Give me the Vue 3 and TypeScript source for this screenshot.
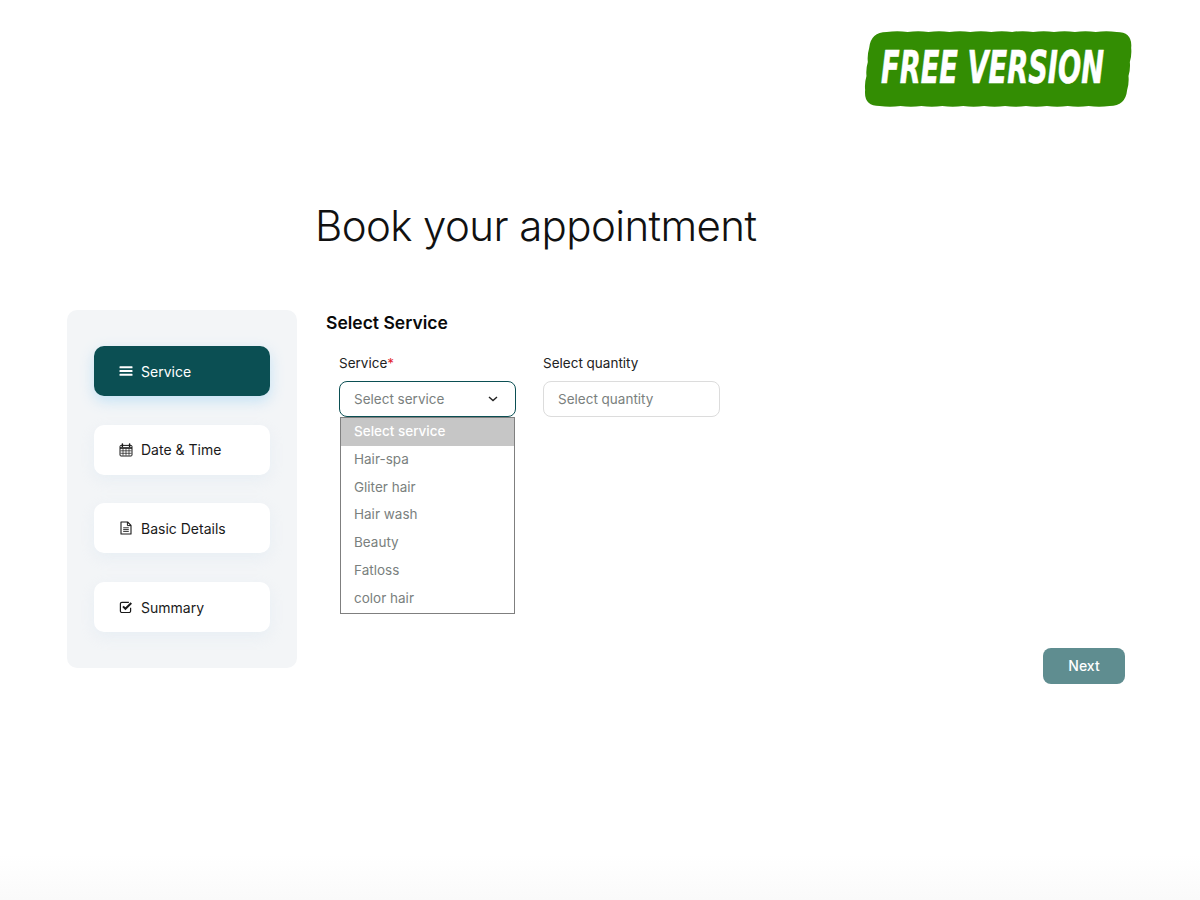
<script setup lang="ts">
import { ref } from 'vue'

type Step = { id: string; label: string; icon: string }

const steps: Step[] = [
  { id: 'service', label: 'Service', icon: 'bars' },
  { id: 'date', label: 'Date & Time', icon: 'calendar' },
  { id: 'details', label: 'Basic Details', icon: 'file' },
  { id: 'summary', label: 'Summary', icon: 'check' },
]
const options = ['Select service', 'Hair-spa', 'Gliter hair', 'Hair wash', 'Beauty', 'Fatloss', 'color hair']

const activeStep = ref('service')
const selected = ref('Select service')

// scalloped edge for the badge: small bumps along the straight sides of a skewed rounded box
function scallop(x1: number, y1: number, x2: number, y2: number, n: number, out: number) {
  let d = ''
  const dx = (x2 - x1) / n
  const dy = (y2 - y1) / n
  const len = Math.hypot(dx, dy)
  const nx = (dy / len) * out
  const ny = (-dx / len) * out
  for (let i = 1; i <= n; i++) {
    const mx = x1 + dx * (i - 0.5) + nx
    const my = y1 + dy * (i - 0.5) + ny
    d += `Q${mx.toFixed(1)} ${my.toFixed(1)} ${(x1 + dx * i).toFixed(1)} ${(y1 + dy * i).toFixed(1)}`
  }
  return d
}
const badgePath =
  'M16 2' +
  scallop(16, 2, 246, 2, 11, 1.6) +
  'Q262 2 262 18' +
  scallop(262, 18, 262, 60, 3, 1.4) +
  'Q262 76 246 76' +
  scallop(246, 76, 16, 76, 11, 1.6) +
  'Q0 76 0 60' +
  scallop(0, 60, 0, 18, 3, 1.4) +
  'Q0 2 16 2Z'
</script>

<template>
  <div class="page">
    <div class="badge">
      <svg class="badge-bg" width="274" height="80" viewBox="0 0 274 80">
        <g transform="translate(8 0) skewX(-5.5) translate(4 1)">
          <path :d="badgePath" fill="#338d03" />
        </g>
      </svg>
      <span class="badge-text">FREE VERSION</span>
    </div>

    <h1 class="title">Book your appointment</h1>

    <div class="wizard">
      <aside class="sidebar">
        <button
          v-for="step in steps"
          :key="step.id"
          class="step"
          :class="{ active: activeStep === step.id }"
          @click="activeStep = step.id"
        >
          <svg v-if="step.icon === 'bars'" class="icon" viewBox="0 0 14 14">
            <path d="M1 2.2h12a.5.5 0 0 1 .5.5v1a.5.5 0 0 1-.5.5H1a.5.5 0 0 1-.5-.5v-1a.5.5 0 0 1 .5-.5ZM1 6h12a.5.5 0 0 1 .5.5v1a.5.5 0 0 1-.5.5H1a.5.5 0 0 1-.5-.5v-1A.5.5 0 0 1 1 6ZM1 9.8h12a.5.5 0 0 1 .5.5v1a.5.5 0 0 1-.5.5H1a.5.5 0 0 1-.5-.5v-1a.5.5 0 0 1 .5-.5Z" fill="currentColor" />
          </svg>
          <svg v-else-if="step.icon === 'calendar'" class="icon" viewBox="0 0 14 14">
            <rect x="1" y="2.4" width="12" height="10.6" rx="1" fill="none" stroke="currentColor" />
            <path d="M1 5h12" stroke="currentColor" stroke-width="1.6" />
            <path d="M3.4 1v2.6M10.6 1v2.6" stroke="currentColor" stroke-width="1.5" stroke-linecap="round" />
            <path d="M4 5.5v7M7 5.5v7M10 5.5v7M1.5 7.8h11M1.5 10.3h11" stroke="currentColor" stroke-width=".7" />
          </svg>
          <svg v-else-if="step.icon === 'file'" class="icon" viewBox="0 0 14 14">
            <path d="M2 1h6.6L12 4.4V13H2Z" fill="none" stroke="currentColor" stroke-width="1.1" stroke-linejoin="round" />
            <path d="M8.4 1v3.6H12" fill="none" stroke="currentColor" />
            <path d="M4.2 6.8h5.6M4.2 8.6h5.6M4.2 10.4h5.6" stroke="currentColor" stroke-width=".9" />
          </svg>
          <svg v-else class="icon" viewBox="0 0 14 14">
            <path d="M11.6 7.8V11a1.5 1.5 0 0 1-1.5 1.5H2.9A1.5 1.5 0 0 1 1.4 11V3.8a1.5 1.5 0 0 1 1.5-1.5h7" fill="none" stroke="currentColor" stroke-width="1.2" />
            <path d="M4 6.4l2.4 2.4L12.3 3" fill="none" stroke="currentColor" stroke-width="2" />
          </svg>
          <span>{{ step.label }}</span>
        </button>
      </aside>

      <main class="content">
        <h2 class="section-title">Select Service</h2>
        <div class="fields">
          <div class="field">
            <label class="label">Service<span class="req">*</span></label>
            <div class="control open">
              <span>{{ selected }}</span>
              <svg class="chevron" width="10" height="6" viewBox="0 0 10 6">
                <path d="M1 1l4 3.6L9 1" fill="none" stroke="#222" stroke-width="1.4" />
              </svg>
            </div>
            <ul class="options">
              <li
                v-for="opt in options"
                :key="opt"
                :class="{ current: opt === selected }"
                @click="selected = opt"
              >
                {{ opt }}
              </li>
            </ul>
          </div>
          <div class="field">
            <label class="label">Select quantity</label>
            <div class="control">
              <span>Select quantity</span>
            </div>
          </div>
        </div>
        <button class="next">Next</button>
      </main>
    </div>
  </div>
</template>

<style>
html, body { margin: 0; background: #fff; }
</style>

<style scoped>
.page {
  position: relative;
  box-sizing: border-box;
  height: 900px;
  overflow: hidden;
  padding-top: 198px;
  font-family: Inter, "Liberation Sans", sans-serif;
  background: linear-gradient(to bottom, #fff 0, #fff 855px, #fafafa 900px);
}

.badge {
  position: absolute;
  left: 859px;
  top: 29px;
  width: 274px;
  height: 80px;
}
.badge-bg { position: absolute; left: 0; top: 0; }
.badge-text {
  position: absolute;
  left: 22px;
  top: 11px;
  color: #fff;
  font-family: "DejaVu Sans", sans-serif;
  font-weight: 700;
  font-style: italic;
  font-size: 44px;
  line-height: 56px;
  white-space: nowrap;
  transform-origin: left center;
  transform: scaleX(0.62);
  -webkit-text-stroke: 0.6px #fff;
}

.title {
  margin: 0 0 56px 315px;
  font-size: 42px;
  line-height: 56px;
  font-weight: 300;
  letter-spacing: -0.6px;
  color: #111;
}

.wizard {
  display: flex;
  gap: 29px;
  padding: 0 75px 0 67px;
}

.sidebar {
  box-sizing: border-box;
  width: 230px;
  height: 358px;
  padding: 36px 27px;
  background: #f3f5f7;
  border-radius: 10px;
  display: flex;
  flex-direction: column;
  gap: 28.7px;
}
.step {
  display: flex;
  align-items: center;
  gap: 8px;
  height: 50px;
  flex: none;
  padding: 0 25px;
  border: none;
  border-radius: 10px;
  background: #fff;
  color: #1a1a1a;
  font: inherit;
  font-size: 14px;
  box-shadow: 0 5px 14px rgba(210, 225, 240, 0.3);
  cursor: pointer;
}
.step.active {
  background: #0b4f53;
  color: #fff;
  box-shadow: 0 5px 14px rgba(140, 205, 245, 0.45);
}
.icon { width: 14px; height: 14px; flex: none; }

.content { flex: 1; display: flex; flex-direction: column; }
.section-title {
  margin: 0 0 17px;
  font-size: 17.5px;
  line-height: 26px;
  font-weight: 600;
  color: #0a0a0a;
}
.fields {
  display: flex;
  gap: 27px;
  padding-left: 13px;
  align-items: flex-start;
}
.field { width: 177px; }
.label {
  display: block;
  margin-bottom: 8px;
  font-size: 13.5px;
  line-height: 20px;
  color: #222;
}
.req { color: #e3262e; }
.control {
  box-sizing: border-box;
  height: 36px;
  padding: 0 14px;
  display: flex;
  align-items: center;
  justify-content: space-between;
  border: 1px solid #dcdcdc;
  border-radius: 8px;
  font-size: 13.5px;
  color: #7a7f7e;
}
.control.open { border-color: #0b4f53; }
.chevron { margin-right: 3px; }

.options {
  list-style: none;
  margin: 0 0 0 1px;
  padding: 0;
  width: 175px;
  box-sizing: border-box;
  border: 1px solid #7f7f7f;
  font-size: 13.5px;
  color: #7a7f7e;
}
.options li {
  height: 27.8px;
  line-height: 27.8px;
  padding-left: 13px;
}
.options li.current {
  background: #c6c6c6;
  color: #fff;
  font-weight: 500;
}

.next {
  align-self: flex-end;
  margin-top: 34px;
  width: 82px;
  height: 36px;
  border: none;
  border-radius: 8px;
  background: #5f8d90;
  color: #fff;
  font: inherit;
  font-size: 14px;
  font-weight: 500;
  cursor: pointer;
}
</style>
